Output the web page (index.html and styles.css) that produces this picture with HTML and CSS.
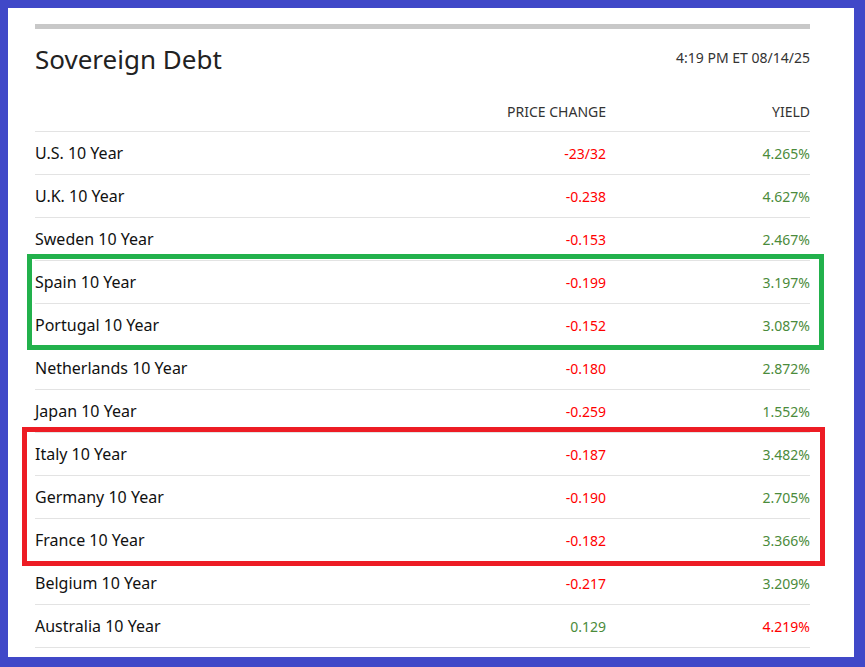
FILE: index.html
```html
<!DOCTYPE html>
<html>
<head>
<meta charset="utf-8">
<link rel="stylesheet" href="styles.css">
</head>
<body>
<div class="panel">
  <div class="bar"></div>
  <div class="head">
    <h1 class="title">Sovereign Debt</h1>
    <span class="stamp">4:19 PM ET 08/14/25</span>
  </div>
  <div class="table">
    <div class="row colhead"><span></span><span class="num">PRICE CHANGE</span><span class="num">YIELD</span></div>
    <div class="row"><span class="name">U.S. 10 Year</span><span class="num neg">-23/32</span><span class="num pos">4.265%</span></div>
    <div class="row"><span class="name">U.K. 10 Year</span><span class="num neg">-0.238</span><span class="num pos">4.627%</span></div>
    <div class="row"><span class="name">Sweden 10 Year</span><span class="num neg">-0.153</span><span class="num pos">2.467%</span></div>
    <div class="row"><span class="name">Spain 10 Year</span><span class="num neg">-0.199</span><span class="num pos">3.197%</span></div>
    <div class="row"><span class="name">Portugal 10 Year</span><span class="num neg">-0.152</span><span class="num pos">3.087%</span></div>
    <div class="row"><span class="name">Netherlands 10 Year</span><span class="num neg">-0.180</span><span class="num pos">2.872%</span></div>
    <div class="row"><span class="name">Japan 10 Year</span><span class="num neg">-0.259</span><span class="num pos">1.552%</span></div>
    <div class="row"><span class="name">Italy 10 Year</span><span class="num neg">-0.187</span><span class="num pos">3.482%</span></div>
    <div class="row"><span class="name">Germany 10 Year</span><span class="num neg">-0.190</span><span class="num pos">2.705%</span></div>
    <div class="row"><span class="name">France 10 Year</span><span class="num neg">-0.182</span><span class="num pos">3.366%</span></div>
    <div class="row"><span class="name">Belgium 10 Year</span><span class="num neg">-0.217</span><span class="num pos">3.209%</span></div>
    <div class="row"><span class="name">Australia 10 Year</span><span class="num pos">0.129</span><span class="num neg">4.219%</span></div>
  </div>
  <div class="mark mark-green"></div>
  <div class="mark mark-red"></div>
</div>
</body>
</html>
```
FILE: styles.css
```css
html, body {
  margin: 0;
  padding: 0;
  background: #4048c8;
}
body {
  padding: 8px 11px 10px 8px;
  height: 667px;
  box-sizing: border-box;
  font-family: "Noto Sans", "Open Sans", sans-serif;
}
.panel {
  position: relative;
  background: #fff;
  height: 649px;
  padding: 16px 44px 0 27px;
  box-sizing: border-box;
  overflow: hidden;
}
.bar {
  height: 5px;
  background: #c8c8c8;
}
.head {
  height: 60px;
  display: flex;
  align-items: center;
  justify-content: space-between;
}
.title {
  margin: 0;
  font-size: 26px;
  font-weight: 400;
  color: #222;
  line-height: 32px;
}
.stamp {
  font-size: 14px;
  color: #333;
  margin-top: -3px;
}
.row {
  display: grid;
  grid-template-columns: 1fr 200px 204px;
  align-items: center;
  height: 43px;
  border-bottom: 1px solid #e3e3e3;
  box-sizing: border-box;
}
.row.colhead {
  height: 43px;
  align-items: end;
  padding-bottom: 9px;
}
.colhead .num {
  font-size: 14px;
  color: #333;
  line-height: 20px;
}
.name {
  font-size: 16px;
  color: #111;
}
.num {
  text-align: right;
  font-size: 14px;
}
.neg { color: #f00; }
.pos { color: #4b8b3b; }
.mark {
  position: absolute;
  border: 5px solid;
  box-sizing: border-box;
}
.mark-green {
  border-color: #22b14c;
  left: 19px;
  top: 246px;
  width: 797px;
  height: 96px;
}
.mark-red {
  border-color: #ed1c24;
  left: 14px;
  top: 419px;
  width: 803px;
  height: 139px;
}
```
